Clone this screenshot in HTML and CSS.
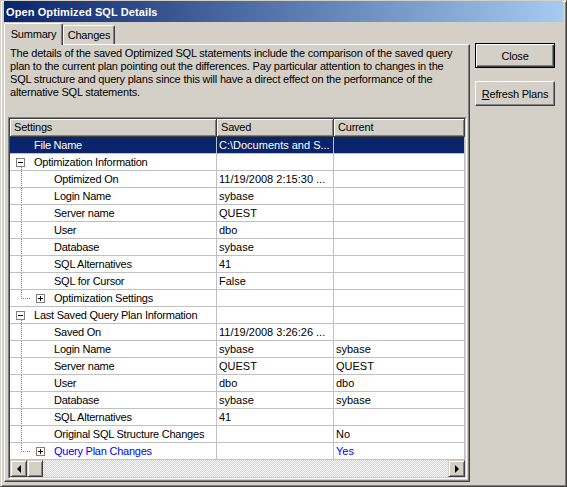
FILE: index.html
```html
<!DOCTYPE html>
<html>
<head>
    <title>Open Optimized SQL Details</title>
    <link rel="stylesheet" href="styles.css">
</head>
<body>
<div class="window">
    <div class="titlebar">Open Optimized SQL Details</div>
    <div class="client">
        <div class="tabs">
            <div class="tabstrip">
                <div class="tab active">Summary</div>
                <div class="tab">Changes</div>
            </div>
            <div class="panel">
                <p class="desc">The details of the saved Optimized SQL statements include the comparison of the saved query<br>plan to the current plan pointing out the differences. Pay particular attention to changes in the<br>SQL structure and query plans since this will have a direct effect on the performance of the<br>alternative SQL statements.</p>
                <div class="grid">
                    <div class="grid-in">
                        <div class="ghead">
                            <div class="hcell">Settings</div>
                            <div class="hcell">Saved</div>
                            <div class="hcell">Current</div>
                        </div>
                        <div class="row sel"><div class="c1 n0">File Name</div><div>C:\Documents and S...</div><div></div></div>
                        <div class="row"><div class="c1 grp"><span class="box minus"></span>Optimization Information</div><div></div><div></div></div>
                        <div class="row"><div class="c1 leaf">Optimized On</div><div>11/19/2008 2:15:30 ...</div><div></div></div>
                        <div class="row"><div class="c1 leaf">Login Name</div><div>sybase</div><div></div></div>
                        <div class="row"><div class="c1 leaf">Server name</div><div>QUEST</div><div></div></div>
                        <div class="row"><div class="c1 leaf">User</div><div>dbo</div><div></div></div>
                        <div class="row"><div class="c1 leaf">Database</div><div>sybase</div><div></div></div>
                        <div class="row"><div class="c1 leaf">SQL Alternatives</div><div>41</div><div></div></div>
                        <div class="row"><div class="c1 leaf">SQL for Cursor</div><div>False</div><div></div></div>
                        <div class="row"><div class="c1 sub"><span class="box plus"></span>Optimization Settings</div><div></div><div></div></div>
                        <div class="row"><div class="c1 grp"><span class="box minus"></span>Last Saved Query Plan Information</div><div></div><div></div></div>
                        <div class="row"><div class="c1 leaf">Saved On</div><div>11/19/2008 3:26:26 ...</div><div></div></div>
                        <div class="row"><div class="c1 leaf">Login Name</div><div>sybase</div><div>sybase</div></div>
                        <div class="row"><div class="c1 leaf">Server name</div><div>QUEST</div><div>QUEST</div></div>
                        <div class="row"><div class="c1 leaf">User</div><div>dbo</div><div>dbo</div></div>
                        <div class="row"><div class="c1 leaf">Database</div><div>sybase</div><div>sybase</div></div>
                        <div class="row"><div class="c1 leaf">SQL Alternatives</div><div>41</div><div></div></div>
                        <div class="row"><div class="c1 leaf">Original SQL Structure Changes</div><div></div><div>No</div></div>
                        <div class="row link"><div class="c1 sub"><span class="box plus"></span>Query Plan Changes</div><div></div><div>Yes</div></div>
                        <div class="hscroll">
                            <div class="sbtn"><span class="arrow-left"></span></div>
                            <div class="thumb"></div>
                            <div class="track"></div>
                            <div class="sbtn"><span class="arrow-right"></span></div>
                        </div>
                    </div>
                </div>
            </div>
        </div>
        <div class="buttons">
            <button class="btn default">Close</button>
            <button class="btn refresh"><u>R</u>efresh Plans</button>
        </div>
    </div>
</div>
</body>
</html>
```

FILE: styles.css
```css
* {
  box-sizing: border-box;
}

body {
  margin: 0;
  background: #d4d0c8;
  font-family: "Liberation Sans", Arial, sans-serif;
  font-size: 11px;
  letter-spacing: -0.2px;
  color: #000;
}

.window {
  width: 567px;
  height: 487px;
  padding: 0 3px 3px 3px;
  background: #d4d0c8;
  border: 1px solid;
  border-color: #d4d0c8 #404040 #404040 #d4d0c8;
  box-shadow: inset 1px 1px #fff, inset -1px -1px #808080;
}

.titlebar {
  height: 21px;
  padding: 1px 0 0 2px;
  line-height: 20px;
  font-weight: bold;
  letter-spacing: 0.1px;
  color: #fff;
  background: linear-gradient(to right, #0a246a, #a6caf0);
}

.client {
  display: flex;
  margin-top: 1px;
}

/* tabs */
.tabs {
  width: 466px;
}

.tabstrip {
  display: flex;
  align-items: flex-end;
  height: 21px;
}

.tab {
  width: 52px;
  height: 19px;
  padding-top: 2px;
  text-align: center;
  border: 1px solid;
  border-bottom: none;
  border-color: #fff #404040 transparent #fff;
  border-radius: 2px 2px 0 0;
  box-shadow: inset -1px 0 #808080;
  line-height: 14px;
}

.tab.active {
  width: 59px;
  height: 22px;
  margin-bottom: -1px;
  padding-top: 3px;
  background: #d4d0c8;
  z-index: 1;
}

.panel {
  height: 438px;
  padding: 2px 1px 0 3px;
  border: 1px solid;
  border-color: #fff #404040 #404040 #fff;
  box-shadow: inset -1px -1px #808080;
}

.desc {
  margin: 0 0 18px 2px;
  line-height: 13px;
  white-space: nowrap;
}

/* grid */
.grid {
  width: 459px;
  border: 1px solid;
  border-color: #808080 #fff #fff #808080;
}

.grid-in {
  border: 1px solid;
  border-color: #404040 #d4d0c8 #d4d0c8 #404040;
  background: #fff;
}

.ghead,
.row {
  display: grid;
  grid-template-columns: 207px 117px 131px;
}

.hcell {
  height: 18px;
  padding-left: 4px;
  line-height: 16px;
  background: #d4d0c8;
  border-right: 1px solid #404040;
  border-bottom: 1px solid #404040;
  box-shadow: inset 1px 1px #fff, inset -1px -1px #808080;
}

.row > div {
  height: 17px;
  padding-left: 2px;
  line-height: 16px;
  letter-spacing: 0;
  white-space: nowrap;
  overflow: hidden;
  border-right: 1px solid #c0c0c0;
  border-bottom: 1px solid #c0c0c0;
}

.row.sel > div {
  background: #0a246a;
  color: #fff;
}

.row.link > div {
  color: #0000ff;
}

.row > .c1 {
  display: flex;
  align-items: center;
  padding-left: 0;
  letter-spacing: -0.24px;
  background-repeat: no-repeat;
}

.row > .n0 {
  padding-left: 24px;
}

.row > .leaf {
  padding-left: 44px;
  background-image: repeating-linear-gradient(to bottom, #808080 0 1px, transparent 1px 2px);
  background-position: 11px 0;
  background-size: 1px 17px;
}

.grp {
  background-image: repeating-linear-gradient(to bottom, #808080 0 1px, transparent 1px 2px);
  background-position: 11px 13px;
  background-size: 1px 4px;
}

.sub {
  background-image: repeating-linear-gradient(to bottom, #808080 0 1px, transparent 1px 2px),
                    repeating-linear-gradient(to right, #808080 0 1px, transparent 1px 2px);
  background-position: 11px 0, 11px 8px;
  background-size: 1px 9px, 10px 1px;
}

.box {
  display: flex;
  align-items: center;
  justify-content: center;
  width: 9px;
  height: 9px;
  margin-right: 9px;
  background: #fff;
  border: 1px solid #808080;
  position: relative;
}

.grp .box {
  margin-left: 6px;
}

.sub .box {
  margin-left: 26px;
}

.box::before {
  content: "";
  width: 5px;
  height: 1px;
  background: #000;
}

.box.plus::after {
  content: "";
  position: absolute;
  left: 3px;
  top: 1px;
  width: 1px;
  height: 5px;
  background: #000;
}

/* scrollbar */
.hscroll {
  display: flex;
  height: 17px;
  background: repeating-conic-gradient(#d4d0c8 0 25%, #fff 0 50%) 0 0 / 2px 2px;
}

.sbtn,
.thumb {
  display: flex;
  align-items: center;
  justify-content: center;
  width: 17px;
  height: 17px;
  background: #d4d0c8;
  border: 1px solid;
  border-color: #d4d0c8 #404040 #404040 #d4d0c8;
  box-shadow: inset 1px 1px #fff, inset -1px -1px #808080;
}

.thumb {
  width: 16px;
}

.track {
  flex: 1;
}

.arrow-left {
  border-right: 4px solid #000;
  border-top: 4px solid transparent;
  border-bottom: 4px solid transparent;
}

.arrow-right {
  border-left: 4px solid #000;
  border-top: 4px solid transparent;
  border-bottom: 4px solid transparent;
}

/* side buttons */
.buttons {
  margin: 20px 0 0 5px;
  width: 80px;
}

.btn {
  display: block;
  width: 80px;
  height: 25px;
  padding: 0;
  font: inherit;
  letter-spacing: -0.2px;
  color: #000;
  background: #d4d0c8;
  border: 1px solid;
  border-color: #fff #404040 #404040 #fff;
  box-shadow: inset -1px -1px #808080;
}

.btn.default {
  border-color: #000;
  box-shadow: inset 1px 1px #fff, inset -1px -1px #404040, inset -2px -2px #808080;
}

.btn.refresh {
  margin-top: 13px;
}
```
